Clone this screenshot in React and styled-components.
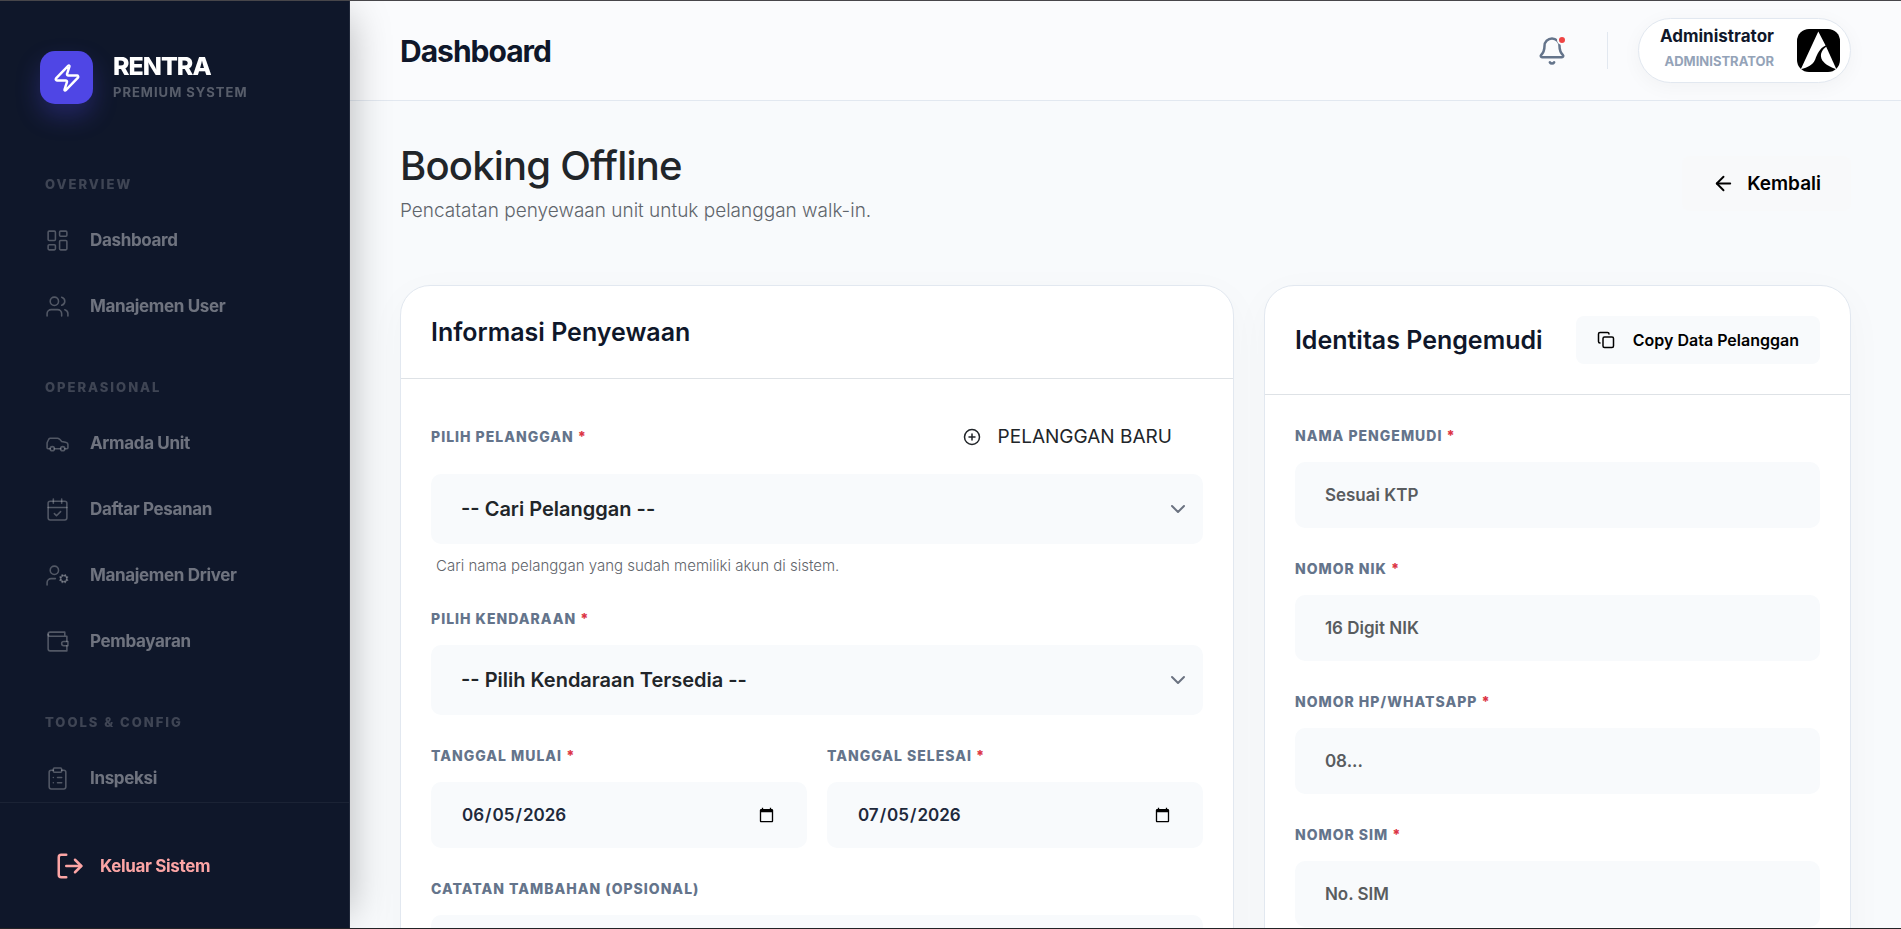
import React from 'react';
import styled, { createGlobalStyle } from 'styled-components';
import {
    ArrowLeft,
    Bell,
    CalendarCheck,
    Car,
    ChevronDown,
    CirclePlus,
    ClipboardList,
    Copy,
    LayoutDashboard,
    LogOut,
    UserCog,
    Users,
    Zap,
} from 'lucide-react';

const WalletIcon = ({ size, strokeWidth }) => (
    <svg width={size} height={size} viewBox="0 0 24 24" fill="none" stroke="currentColor"
        strokeWidth={strokeWidth} strokeLinecap="round" strokeLinejoin="round" aria-hidden="true">
        <path d="M21 12V7H5a2 2 0 0 1 0-4h14v4" />
        <path d="M3 5v14a2 2 0 0 0 2 2h16v-5" />
        <path d="M18 12a2 2 0 0 0 0 4h4v-4Z" />
    </svg>
);

const menu = [
    {
        title: 'Overview',
        items: [
            { label: 'Dashboard', icon: LayoutDashboard },
            { label: 'Manajemen User', icon: Users },
        ],
    },
    {
        title: 'Operasional',
        items: [
            { label: 'Armada Unit', icon: Car },
            { label: 'Daftar Pesanan', icon: CalendarCheck },
            { label: 'Manajemen Driver', icon: UserCog },
            { label: 'Pembayaran', icon: WalletIcon },
        ],
    },
    {
        title: 'Tools & Config',
        items: [{ label: 'Inspeksi', icon: ClipboardList }],
    },
];

const driverFields = [
    { id: 'nama', label: 'Nama Pengemudi', placeholder: 'Sesuai KTP' },
    { id: 'nik', label: 'Nomor NIK', placeholder: '16 Digit NIK' },
    { id: 'hp', label: 'Nomor HP/WhatsApp', placeholder: '08...' },
    { id: 'sim', label: 'Nomor SIM', placeholder: 'No. SIM' },
];

const Label = ({ htmlFor, required, children }) => (
    <FieldLabel htmlFor={htmlFor}>
        {children} {required && <Required>*</Required>}
    </FieldLabel>
);

const SelectBox = ({ id, text }) => (
    <SelectWrapper>
        <Select id={id} defaultValue="">
            <option value="">{text}</option>
        </Select>
        <ChevronDown size={24} />
    </SelectWrapper>
);

function Sidebar() {
    return (
        <SidebarWrapper>
            <Brand>
                <BrandLogo>
                    <Zap size={30} />
                </BrandLogo>
                <div>
                    <BrandName>RENTRA</BrandName>
                    <BrandTag>Premium System</BrandTag>
                </div>
            </Brand>
            <Nav>
                {menu.map(group => (
                    <NavGroup key={group.title}>
                        <NavTitle>{group.title}</NavTitle>
                        {group.items.map(({ label, icon: Icon }) => (
                            <NavLink href="#" key={label}>
                                <Icon size={25} strokeWidth={1.5} />
                                {label}
                            </NavLink>
                        ))}
                    </NavGroup>
                ))}
            </Nav>
            <SidebarFooter>
                <LogoutLink href="#">
                    <LogOut size={30} />
                    Keluar Sistem
                </LogoutLink>
            </SidebarFooter>
        </SidebarWrapper>
    );
}

function Topbar() {
    return (
        <TopbarWrapper>
            <TopbarTitle>Dashboard</TopbarTitle>
            <TopbarRight>
                <BellButton type="button" aria-label="Notifikasi">
                    <Bell size={30} />
                    <BellDot />
                </BellButton>
                <Divider />
                <Profile type="button">
                    <ProfileText>
                        <ProfileName>Administrator</ProfileName>
                        <ProfileRole>Administrator</ProfileRole>
                    </ProfileText>
                    <Avatar viewBox="0 0 43 43" aria-hidden="true">
                        <rect width="43" height="43" rx="12" fill="#000" />
                        <path fill="#fff" d="M21.3 2.5L28.6 16.6C22.5 19.5 20.5 25 18.2 30.5C15.6 36.2 11 38.3 3.8 40.3Z" />
                        <path fill="#fff" d="M29.2 17.8L39.4 40.3C34 38.4 28.5 36 25.4 31.5C22.4 26.8 24 21.5 29.2 17.8Z" />
                    </Avatar>
                </Profile>
            </TopbarRight>
        </TopbarWrapper>
    );
}

export default function App() {
    return (
        <Shell>
            <GlobalStyle />
            <Sidebar />
            <Main>
                <Topbar />
                <Content>
                    <PageHeader>
                        <div>
                            <PageTitle>Booking Offline</PageTitle>
                            <PageSubtitle>Pencatatan penyewaan unit untuk pelanggan walk-in.</PageSubtitle>
                        </div>
                        <BackButton type="button">
                            <ArrowLeft size={23} />
                            Kembali
                        </BackButton>
                    </PageHeader>
                    <Row>
                        <Col>
                            <Card>
                                <CardHeader>
                                    <CardTitle>Informasi Penyewaan</CardTitle>
                                </CardHeader>
                                <CardBody>
                                    <Field>
                                        <LabelRow>
                                            <Label htmlFor="pelanggan" required>Pilih Pelanggan</Label>
                                            <NewCustomerButton type="button">
                                                <CirclePlus size={18} />
                                                PELANGGAN BARU
                                            </NewCustomerButton>
                                        </LabelRow>
                                        <SelectBox id="pelanggan" text="-- Cari Pelanggan --" />
                                        <Hint>Cari nama pelanggan yang sudah memiliki akun di sistem.</Hint>
                                    </Field>
                                    <Field>
                                        <Label htmlFor="kendaraan" required>Pilih Kendaraan</Label>
                                        <SelectBox id="kendaraan" text="-- Pilih Kendaraan Tersedia --" />
                                    </Field>
                                    <DateRow>
                                        <Field>
                                            <Label htmlFor="mulai" required>Tanggal Mulai</Label>
                                            <Input id="mulai" type="date" defaultValue="2026-06-05" />
                                        </Field>
                                        <Field>
                                            <Label htmlFor="selesai" required>Tanggal Selesai</Label>
                                            <Input id="selesai" type="date" defaultValue="2026-07-05" />
                                        </Field>
                                    </DateRow>
                                    <Field>
                                        <Label htmlFor="catatan">Catatan Tambahan (Opsional)</Label>
                                        <TextArea id="catatan" rows="3" />
                                    </Field>
                                </CardBody>
                            </Card>
                        </Col>
                        <Col>
                            <Card>
                                <CardHeader>
                                    <CardTitle>Identitas Pengemudi</CardTitle>
                                    <CopyButton type="button">
                                        <Copy size={18} />
                                        Copy Data Pelanggan
                                    </CopyButton>
                                </CardHeader>
                                <CardBody>
                                    {driverFields.map(({ id, label, placeholder }) => (
                                        <Field key={id}>
                                            <Label htmlFor={id} required>{label}</Label>
                                            <Input id={id} type="text" placeholder={placeholder} />
                                        </Field>
                                    ))}
                                </CardBody>
                            </Card>
                        </Col>
                    </Row>
                </Content>
            </Main>
        </Shell>
    );
}

const GlobalStyle = createGlobalStyle`
*{
    box-sizing: border-box;
}
body{
    margin: 0;
    background: #f8fafc;
    color: #212529;
    font-family: Inter, "Liberation Sans", sans-serif;
}
button, input, select, textarea{
    font-family: inherit;
}
svg{
    flex-shrink: 0;
}
`;

const Shell = styled.div`
display: flex;
height: 100vh;
overflow: hidden;
border-top: 1px solid #47464a;
border-bottom: 1px solid #222326;
`;

const SidebarWrapper = styled.aside`
position: relative;
z-index: 2;
display: flex;
flex-direction: column;
flex: 0 0 350px;
background: #0f172a;
border-right: 1px solid #20283a;
box-shadow: 15px 0 38px -15px rgba(0,0,0,0.28);
`;

const Brand = styled.div`
display: flex;
align-items: center;
gap: 20px;
padding: 50px 40px;
`;

const BrandLogo = styled.div`
display: flex;
align-items: center;
justify-content: center;
width: 53px;
height: 53px;
border-radius: 15px;
background: #4f46e5;
color: #fff;
box-shadow: 0 12px 24px rgba(79,70,229,0.3);
`;

const BrandName = styled.div`
color: #fff;
font-size: 25px;
line-height: 28px;
font-weight: 800;
letter-spacing: -1px;
`;

const BrandTag = styled.div`
color: rgba(255,255,255,0.3);
font-size: 13px;
line-height: 24px;
font-weight: 700;
letter-spacing: 1px;
text-transform: uppercase;
`;

const Nav = styled.nav`
flex: 1;
min-height: 0;
overflow: hidden;
padding: 20px 45px 0;
`;

const NavGroup = styled.div`
padding-bottom: 35px;
`;

const NavTitle = styled.div`
margin-bottom: 16px;
color: rgba(255,255,255,0.2);
font-size: 13px;
line-height: 20px;
font-weight: 800;
letter-spacing: 2px;
text-transform: uppercase;
`;

const NavLink = styled.a`
display: flex;
align-items: center;
gap: 20px;
height: 60px;
margin-bottom: 6px;
color: rgba(255,255,255,0.4);
font-size: 17px;
font-weight: 700;
letter-spacing: -0.02em;
text-decoration: none;
svg{
    opacity: 0.7;
}
`;

const SidebarFooter = styled.div`
padding: 30px;
border-top: 1px solid #1b2335;
`;

const LogoutLink = styled.a`
display: flex;
align-items: center;
gap: 15px;
height: 65px;
padding: 0 25px;
color: #fca5a5;
font-size: 17px;
font-weight: 700;
letter-spacing: -0.02em;
text-decoration: none;
`;

const Main = styled.main`
flex: 1;
min-width: 0;
overflow-y: auto;
scrollbar-width: none;
background: #f8fafc;
`;

const TopbarWrapper = styled.header`
display: flex;
align-items: center;
justify-content: space-between;
height: 100px;
padding: 0 50px;
background: #fafbfd;
border-bottom: 1px solid #e2e8f0;
`;

const TopbarTitle = styled.div`
color: #0f172a;
font-size: 30px;
font-weight: 700;
letter-spacing: -1px;
`;

const TopbarRight = styled.div`
display: flex;
align-items: center;
gap: 30px;
`;

const BellButton = styled.button`
position: relative;
display: flex;
padding: 10px;
border: none;
background: transparent;
color: #64748b;
`;

const BellDot = styled.span`
position: absolute;
top: 9px;
right: 10px;
width: 10px;
height: 10px;
border: 2px solid #fafbfd;
border-radius: 50%;
background: #ef4444;
`;

const Divider = styled.div`
width: 1px;
height: 37px;
background: #e2e8f0;
`;

const Profile = styled.button`
display: flex;
align-items: center;
gap: 23px;
padding: 10px 10px 10px 21px;
border: 1px solid #e2e8f0;
border-radius: 33px;
background: #fff;
box-shadow: 0 4px 20px rgba(0,0,0,0.04);
`;

const ProfileText = styled.div`
margin: -6px 0 -1px;
text-align: right;
`;

const ProfileName = styled.div`
color: #0f172a;
font-size: 17px;
line-height: 26px;
font-weight: 700;
`;

const ProfileRole = styled.div`
color: #94a3b8;
font-size: 13px;
line-height: 24px;
font-weight: 700;
text-transform: uppercase;
`;

const Avatar = styled.svg`
width: 43px;
height: 43px;
`;

const Content = styled.div`
padding: 40px 50px;
`;

const PageHeader = styled.div`
display: flex;
align-items: center;
justify-content: space-between;
margin-bottom: 60px;
`;

const PageTitle = styled.h1`
margin: 0;
font-size: 40px;
line-height: 50px;
font-weight: 500;
letter-spacing: -0.02em;
`;

const PageSubtitle = styled.p`
margin: 5px 0 0;
color: #5f656b;
font-size: 19px;
line-height: 29px;
font-weight: 300;
`;

const Button = styled.button`
display: inline-flex;
align-items: center;
border: none;
border-radius: 8px;
background: #f8f9fa;
color: #000;
font-weight: 600;
white-space: nowrap;
`;

const BackButton = styled(Button)`
gap: 12px;
height: 55px;
padding: 0 30px;
font-size: 19px;
`;

const CopyButton = styled(Button)`
gap: 18px;
height: 48px;
padding: 0 21px;
background: #f8fafc;
font-size: 16px;
`;

const NewCustomerButton = styled(Button)`
gap: 17px;
height: 55px;
padding: 0 31px;
background: transparent;
color: #212529;
font-size: 19px;
font-weight: 400;
`;

/* columns keep their gutter as padding, so the row bleeds 15px each side */
const Row = styled.div`
display: grid;
grid-template-columns: 7fr 5fr;
margin: 0 -15px;
`;

const Col = styled.div`
min-width: 0;
padding: 0 15px;
`;

const Card = styled.section`
height: 100%;
border: 1px solid #e2e8f0;
border-radius: 30px;
background: #fff;
box-shadow: 0 10px 40px rgba(15,23,42,0.03);
`;

const CardHeader = styled.div`
display: flex;
align-items: center;
justify-content: space-between;
gap: 20px;
padding: 30px;
border-bottom: 1px solid #dee2e6;
`;

const CardTitle = styled.h2`
margin: 0;
color: #0f172a;
font-size: 25px;
line-height: 32px;
font-weight: 600;
white-space: nowrap;
`;

const CardBody = styled.div`
padding: 30px;
`;

const Field = styled.div`
margin-bottom: 30px;
`;

const FieldLabel = styled.label`
display: block;
margin-bottom: 16px;
color: #64748b;
font-size: 14px;
line-height: 21px;
font-weight: 800;
letter-spacing: 1px;
text-transform: uppercase;
`;

const Required = styled.span`
color: #dc3545;
`;

const LabelRow = styled.div`
display: flex;
align-items: center;
justify-content: space-between;
margin-bottom: 10px;
${FieldLabel}{
    margin-bottom: 0;
}
`;

const DateRow = styled.div`
display: grid;
grid-template-columns: 1fr 1fr;
gap: 20px;
`;

const Input = styled.input`
display: block;
width: 100%;
height: 66px;
padding: 0 30px;
border: none;
border-radius: 10px;
background: #f8fafc;
color: #1e293b;
font-size: 17px;
font-weight: 600;
&::placeholder{
    color: #595c5f;
    opacity: 1;
}
`;

const TextArea = styled.textarea`
display: block;
width: 100%;
padding: 20px 30px;
border: none;
border-radius: 10px;
background: #f8fafc;
color: #1e293b;
font-size: 17px;
font-weight: 600;
`;

const SelectWrapper = styled.div`
position: relative;
svg{
    position: absolute;
    top: 23px;
    right: 13px;
    color: #6b7280;
    pointer-events: none;
}
`;

const Select = styled.select`
display: block;
width: 100%;
height: 70px;
padding: 0 50px 0 30px;
border: none;
border-radius: 10px;
background: #f8fafc;
color: #212529;
font-size: 20px;
font-weight: 600;
appearance: none;
`;

const Hint = styled.div`
margin-top: 10px;
padding-left: 5px;
color: #5f656b;
font-size: 15px;
line-height: 24px;
font-weight: 300;
`;
